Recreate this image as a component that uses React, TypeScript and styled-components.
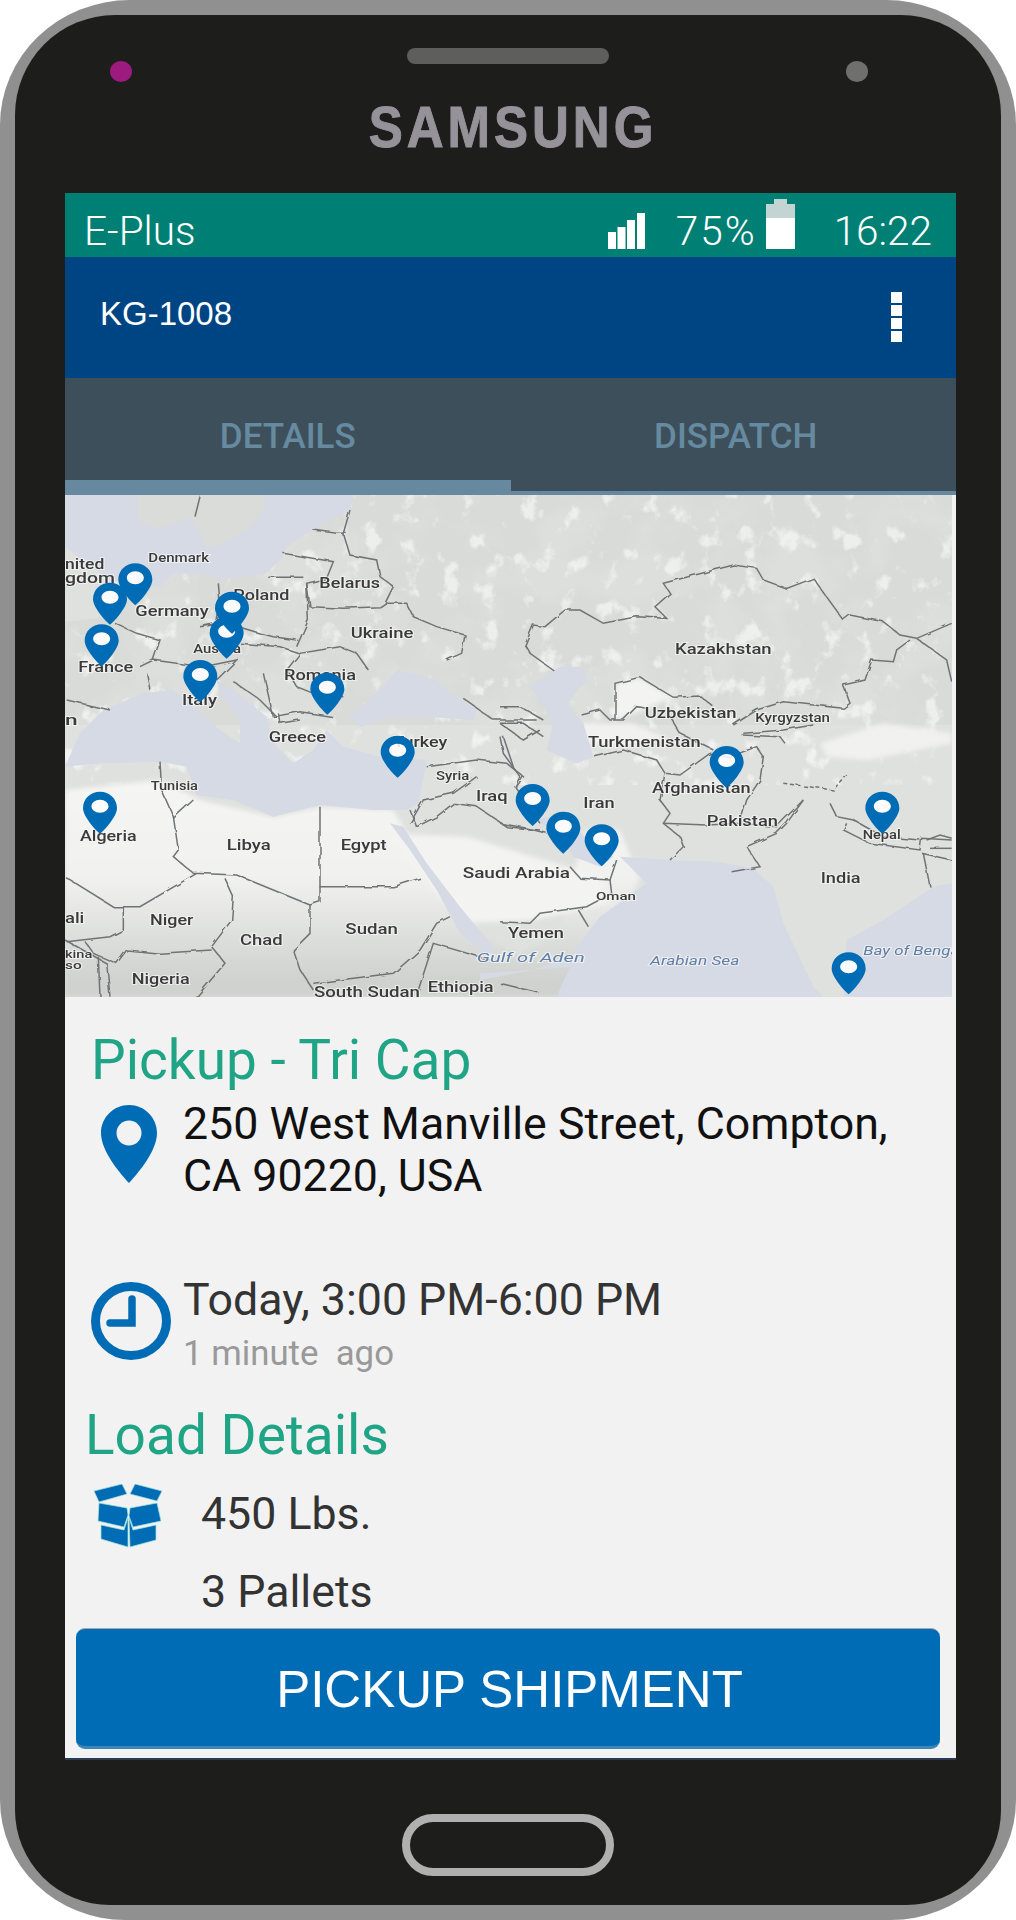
import React, { ReactElement } from 'react'
import styled, { createGlobalStyle } from 'styled-components'

const GlobalStyle = createGlobalStyle`
  html, body {
    margin: 0;
    padding: 0;
    background: #fff;
  }
  * {
    box-sizing: border-box;
  }
`

const Phone = styled.div`
  width: 1016px;
  height: 1920px;
  padding: 15px;
  background: #909090;
  border-radius: 130px 130px 125px 125px / 125px 125px 120px 120px;
  font-family: Roboto, 'Liberation Sans', sans-serif;
`

const Body = styled.div`
  height: 1890px;
  padding: 0 45px 0 50px;
  background: #1d1d1b;
  display: flex;
  flex-direction: column;
  border-radius: 100px 100px 95px 95px / 100px 100px 95px 95px;
`

const TopBezel = styled.div`
  height: 178px;
  padding-top: 33px;
  display: flex;
  flex-direction: column;
`

const Sensors = styled.div`
  height: 34px;
  padding-left: 45px;
  display: flex;
`

const Camera = styled.div<{ $color: string }>`
  width: 22px;
  height: 21px;
  margin-top: 13px;
  border-radius: 50%;
  background: ${(p) => p.$color};
`

const Speaker = styled.div`
  width: 202px;
  height: 16px;
  margin: 0 237px 0 275px;
  border-radius: 8px;
  background: #5e5e5d;
`

const Logo = styled.div`
  margin-top: 17px;
  margin-left: 5px;
  text-align: center;
  font-family: 'Liberation Sans', sans-serif;
  font-weight: 700;
  font-size: 58px;
  line-height: 56px;
  letter-spacing: 4.5px;
  color: #96929a;
  -webkit-text-stroke: 1px #96929a;
  transform: scaleX(0.88);
`

const Screen = styled.div`
  height: 1567px;
  background: #f2f2f2;
  display: flex;
  flex-direction: column;
  border-bottom: 2px solid #2b3a55;
`

const StatusBar = styled.div`
  height: 64px;
  flex-shrink: 0;
  padding: 5px 24px 8px 19px;
  background: #008075;
  color: #fff;
  display: flex;
  align-items: flex-end;
  font-weight: 300;
  font-size: 40.5px;
  line-height: 36px;
`

const Carrier = styled.div`
  margin-right: auto;
`

const StatusText = styled.div<{ $gap: number; $spacing?: number }>`
  margin-left: ${(p) => p.$gap}px;
  letter-spacing: ${(p) => p.$spacing || 0}px;
`

const StatusIcon = styled.svg<{ $gap: number }>`
  display: block;
  margin-left: ${(p) => p.$gap}px;
`

const AppBar = styled.div`
  height: 121px;
  flex-shrink: 0;
  padding: 0 54px 7px 35px;
  background: #004583;
  color: #fff;
  display: flex;
  align-items: center;
  justify-content: space-between;
  font-family: 'Liberation Sans', sans-serif;
  font-size: 33px;
`

const MenuDots = styled.div`
  width: 11px;
  display: flex;
  flex-direction: column;
  gap: 2px;
  margin-top: 5px;
`

const MenuDot = styled.div`
  height: 11px;
  background: #fff;
`

const Tabs = styled.div`
  height: 117px;
  flex-shrink: 0;
  display: flex;
  background: #3e4f5c;
`

const Tab = styled.div<{ $active?: boolean }>`
  width: 50%;
  padding-top: 39px;
  text-align: center;
  font-weight: 500;
  font-size: 35px;
  line-height: 40px;
  color: #668aa0;
  border-bottom: ${(p) => (p.$active ? '15px solid #67899f' : '4px solid #67899f')};
  & + & {
    position: relative;
    padding-left: 5px;
  }
  & + &::before {
    content: '';
    position: absolute;
    left: 0;
    top: 28px;
    height: 85px;
    width: 1px;
    background: #2f3d48;
  }
`

const MapFrame = styled.div`
  height: 502px;
  flex-shrink: 0;
  overflow: hidden;
`

const MapSvg = styled.svg`
  display: block;
  filter: blur(0.4px);
`

const Content = styled.div`
  flex: 1;
  padding-top: 33px;
  display: flex;
  flex-direction: column;
`

const Heading = styled.div<{ $left: number; $top?: number }>`
  margin-left: ${(p) => p.$left}px;
  margin-top: ${(p) => p.$top || 0}px;
  font-size: 55px;
  line-height: 60px;
  color: #1fa585;
`

const Row = styled.div<{ $top: number }>`
  display: flex;
  margin-top: ${(p) => p.$top}px;
`

const IconSlot = styled.div<{ $width: number; $left: number; $top: number }>`
  width: ${(p) => p.$width}px;
  flex-shrink: 0;
  padding-left: ${(p) => p.$left}px;
  margin-top: ${(p) => p.$top}px;
  svg {
    display: block;
  }
`

const MainText = styled.div<{ $color?: string }>`
  font-size: 44.7px;
  line-height: 52px;
  color: ${(p) => p.$color || '#333'};
  white-space: nowrap;
`

const SubText = styled.div`
  margin-top: 7px;
  font-size: 34.8px;
  line-height: 40px;
  color: #999;
  white-space: pre;
`

const Pallets = styled(MainText)`
  margin-top: 26px;
`

const ActionButton = styled.button`
  height: 121px;
  margin: 10px 16px 0 11px;
  padding: 4px 0 0 3px;
  border: none;
  border-top: 1px solid #a9a9a9;
  border-bottom: 3px solid #3d86b8;
  border-radius: 9px;
  background: #006cb5;
  color: #fff;
  font-family: 'Liberation Sans', sans-serif;
  font-size: 51px;
`

const BottomBezel = styled.div`
  flex: 1;
  padding-top: 54px;
  display: flex;
  justify-content: center;
`

const HomeButton = styled.div`
  width: 212px;
  height: 62px;
  margin-right: 5px;
  border: 8px solid #b0b0b0;
  border-radius: 31px;
`

type Label = { x: number; y: number; w: number; s: number; t: string; sea?: boolean }
type Point = { x: number; y: number }

const leftLabels: Label[] = [
  { x: 15, y: 238, w: 118, s: 42, t: 'nited' },
  { x: 15, y: 278, w: 150, s: 42, t: 'gdom' },
  { x: 265, y: 215, w: 182, s: 36, t: 'Denmark' },
  { x: 226, y: 378, w: 220, s: 44, t: 'Germany' },
  { x: 778, y: 293, w: 182, s: 44, t: 'Belarus' },
  { x: 520, y: 331, w: 168, s: 44, t: 'Poland' },
  { x: 872, y: 443, w: 188, s: 44, t: 'Ukraine' },
  { x: 400, y: 490, w: 143, s: 36, t: 'Austria' },
  { x: 55, y: 546, w: 165, s: 44, t: 'France' },
  { x: 672, y: 569, w: 216, s: 44, t: 'Romania' },
  { x: 366, y: 645, w: 105, s: 44, t: 'Italy' },
  { x: 15, y: 706, w: 38, s: 44, t: 'n' },
  { x: 626, y: 756, w: 172, s: 44, t: 'Greece' },
  { x: 1000, y: 771, w: 162, s: 44, t: 'Turkey' },
  { x: 1128, y: 869, w: 100, s: 36, t: 'Syria' },
  { x: 1248, y: 932, w: 95, s: 44, t: 'Iraq' },
  { x: 272, y: 899, w: 142, s: 36, t: 'Tunisia' },
  { x: 60, y: 1054, w: 170, s: 44, t: 'Algeria' },
  { x: 500, y: 1081, w: 132, s: 44, t: 'Libya' },
  { x: 842, y: 1081, w: 138, s: 44, t: 'Egypt' },
  { x: 15, y: 1298, w: 58, s: 44, t: 'ali' },
  { x: 270, y: 1306, w: 130, s: 44, t: 'Niger' },
  { x: 856, y: 1333, w: 158, s: 44, t: 'Sudan' },
  { x: 540, y: 1364, w: 128, s: 44, t: 'Chad' },
  { x: 15, y: 1403, w: 82, s: 34, t: 'kina' },
  { x: 15, y: 1438, w: 50, s: 34, t: 'so' },
  { x: 215, y: 1483, w: 174, s: 44, t: 'Nigeria' },
  { x: 1103, y: 1506, w: 198, s: 44, t: 'Ethiopia' },
  { x: 762, y: 1522, w: 318, s: 44, t: 'South Sudan' },
  { x: 1208, y: 1165, w: 322, s: 44, t: 'Saudi Arabia' },
]

const rightLabels: Label[] = [
  { x: 525, y: 491, w: 290, s: 44, t: 'Kazakhstan' },
  { x: 434, y: 684, w: 276, s: 44, t: 'Uzbekistan' },
  { x: 766, y: 696, w: 224, s: 36, t: 'Kyrgyzstan' },
  { x: 264, y: 770, w: 338, s: 44, t: 'Turkmenistan' },
  { x: 456, y: 908, w: 296, s: 44, t: 'Afghanistan' },
  { x: 250, y: 955, w: 94, s: 44, t: 'Iran' },
  { x: 620, y: 1008, w: 214, s: 44, t: 'Pakistan' },
  { x: 1088, y: 1048, w: 114, s: 36, t: 'Nepal' },
  { x: 962, y: 1180, w: 120, s: 44, t: 'India' },
  { x: 288, y: 1231, w: 120, s: 34, t: 'Oman' },
  { x: 24, y: 1344, w: 168, s: 44, t: 'Yemen' },
  { x: -70, y: 1416, w: 324, s: 40, t: 'Gulf of Aden', sea: true },
  { x: 450, y: 1424, w: 268, s: 40, t: 'Arabian Sea', sea: true },
  { x: 1090, y: 1394, w: 300, s: 40, t: 'Bay of Bengal', sea: true },
]

const leftPins: Point[] = [
  { x: 226, y: 220 },
  { x: 150, y: 278 },
  { x: 125, y: 403 },
  { x: 500, y: 380 },
  { x: 516, y: 305 },
  { x: 421, y: 510 },
  { x: 802, y: 548 },
  { x: 1013, y: 737 },
  { x: 120, y: 905 },
]

const rightPins: Point[] = [
  { x: 98, y: 882 },
  { x: 190, y: 965 },
  { x: 305, y: 1003 },
  { x: 680, y: 768 },
  { x: 1147, y: 905 },
  { x: 1046, y: 1387 },
]

// borders are traced from the crops, zoom units (3x page px)
const leftBorders: string[] = [
  'M870 60 L850 130 L870 195 L950 210 L960 260 L1000 290 L975 340 L1040 340 L1060 380 L1130 410 L1215 435 L1205 490 L1160 510',
  'M760 120 L830 130 L860 130',
  'M670 190 L820 215 L800 265 L740 280 L750 350 L850 355 L960 350 L975 340',
  'M625 262 L730 262',
  'M740 280 L745 390 L710 470',
  'M475 280 L480 340 L470 400 L420 410 L500 400 L600 430 L640 440 L710 450',
  'M680 540 L720 490 L840 470 L890 490 L925 540',
  'M680 540 L710 590 L760 610 L850 620',
  'M540 460 L660 470 L720 490',
  'M165 400 L230 430 L300 450 L280 510',
  'M20 630 L150 660',
  'M240 530 L280 510 L350 520 L430 530 L530 510 L470 570',
  'M260 550 L270 600',
  'M520 575 L600 630 L650 680',
  'M610 550 L640 680 L720 665 L820 680',
  'M655 670 L660 700 L720 690',
  'M300 815 L305 900 L340 980 L355 1080 L340 1100 L400 1150 L530 1155 L750 1245',
  'M340 985 L400 930',
  'M15 1160 L160 1250 L240 1250 L410 1150',
  'M190 1250 L190 1320 L150 1340 L20 1355',
  'M495 1165 L520 1220 L515 1290 L455 1370 L495 1420 L410 1520',
  'M75 1355 L100 1390 L170 1420 L200 1380 L300 1390 L455 1380',
  'M780 950 L780 1190 L1000 1190 L1080 1165',
  'M780 1190 L780 1235 L750 1245 L750 1330 L700 1380 L720 1440 L760 1500',
  'M760 1480 L1000 1450 L1080 1380 L1130 1300 L1170 1280',
  'M1075 1500 L1120 1360 L1290 1410',
  'M1100 830 L1250 810 L1340 820 L1390 860 L1370 890',
  'M1050 1000 L1090 930 L1180 910 L1250 860',
  'M1180 940 L1250 950 L1340 1010 L1440 1020',
  'M1050 960 L1070 1010 L1130 980 L1180 940',
  'M1330 740 L1360 830',
  'M1210 625 L1300 690 L1430 690',
  'M1320 700 L1390 750 L1440 720',
  'M420 20 L405 80',
  'M120 1520 L115 1400',
  'M15 1350 L140 1420 L150 1520',
]

const rightBorders: string[] = [
  'M160 540 L90 490 L75 465 L100 405 L135 410 L195 360 L240 360 L310 400 L410 380 L500 385 L465 350 L510 310 L490 280 L700 225 L770 235 L790 270 L860 295 L940 265 L1030 390 L1050 375 L1150 395 L1200 435 L1250 445 L1355 400',
  'M1230 450 L1190 480 L1180 515 L1115 510 L1095 570 L1030 585 L1050 640 L1030 655 L850 635 L770 660 L700 705',
  'M1250 445 L1340 510 L1355 575',
  'M345 690 L345 580 L420 562 L520 622 L600 618 L640 650',
  'M245 675 L300 660 L330 690 L370 690 L410 650 L440 655',
  'M510 680 L540 730 L640 780',
  'M285 800 L370 780 L470 810 L495 850 L540 855 L630 790',
  'M495 850 L480 930 L510 970 L490 1000 L540 1040 L550 1070 L510 1110',
  'M490 1000 L620 1005 L720 1000 L830 1010 L880 960 L910 930',
  'M630 790 L690 800 L770 770 L790 800 L780 870 L740 930 L720 1000',
  'M910 930 L860 1000 L830 1030 L740 1070 L780 1130 L695 1145',
  'M730 730 L850 720 L940 705',
  'M725 735 L840 740 L855 760',
  'M0 740 L10 790 L60 860 L45 890 L120 1000',
  'M0 1000 L80 1015 L140 1030',
  'M210 1130 L240 1165 L330 1170 L350 1110',
  'M330 1170 L335 1210 L260 1250 L120 1270 L90 1300 L0 1295',
  'M235 1260 L265 1310',
  'M990 940 L1010 980 L1060 990 L1150 1040 L1260 1050',
  'M1040 1000 L1030 1020 L1110 1060 L1260 1080 L1265 1045 L1355 1050',
  'M1270 1090 L1290 1190',
  'M1280 1050 L1320 1035 L1355 1045',
  'M1290 1075 L1355 1075',
  'M1265 1090 L1355 1110',
  'M0 650 L60 650 L130 690',
  'M0 700 L70 700 L130 740',
  'M0 1480 L115 1508',
]

function Pin({ x, y }: Point): ReactElement {
  return (
    <g transform={`translate(${x - 51} ${y}) scale(3)`}>
      <ellipse cx="17" cy="15" rx="9" ry="7.5" fill="#fff" fillOpacity="0.85" />
      <path
        fillRule="evenodd"
        fill="#006cb5"
        d="M17 0C7.5 0 0 7 0 16.5 0 24 11 37 17 42 23 37 34 24 34 16.5 34 7 26.5 0 17 0ZM17 8C22 8 25.5 11 25.5 14.5 25.5 18 22 21 17 21 12 21 8.5 18 8.5 14.5 8.5 11 12 8 17 8Z"
      />
    </g>
  )
}

function MapLabel({ x, y, w, s, t, sea }: Label): ReactElement {
  return (
    <text
      x={x}
      y={y}
      fontSize={s}
      textLength={w}
      lengthAdjust="spacingAndGlyphs"
      fontFamily="Roboto, sans-serif"
      fontWeight={sea ? 400 : 500}
      fontStyle={sea ? 'italic' : 'normal'}
      fill={sea ? '#5f7ea6' : '#3a3a3a'}
      stroke="#f4f4f4"
      strokeWidth="6"
      strokeOpacity="0.75"
      paintOrder="stroke"
    >
      {t}
    </text>
  )
}

function WorldMap(): ReactElement {
  return (
    <MapSvg width="891" height="502" viewBox="65 495 891 502">
      <defs>
        <filter id="blotches" x="0" y="0" width="100%" height="100%">
          <feTurbulence type="fractalNoise" baseFrequency="0.05 0.04" numOctaves="5" seed="11" />
          <feColorMatrix
            type="matrix"
            values="0 0 0 0 1  0 0 0 0 1  0 0 0 0 1  6 0 0 0 -3.6"
          />
        </filter>
        <filter id="shades" x="0" y="0" width="100%" height="100%">
          <feTurbulence type="fractalNoise" baseFrequency="0.015" numOctaves="4" seed="3" />
          <feColorMatrix
            type="matrix"
            values="0 0 0 0 0.74  0 0 0 0 0.77  0 0 0 0 0.74  0 4 0 0 -1.75"
          />
        </filter>
        <filter id="soft" x="-5%" y="-5%" width="110%" height="110%">
          <feGaussianBlur stdDeviation="2.5" />
        </filter>
        <filter id="wiggle" x="-5%" y="-5%" width="110%" height="110%">
          <feTurbulence type="fractalNoise" baseFrequency="0.08" numOctaves="2" seed="5" result="n" />
          <feDisplacementMap in="SourceGraphic" in2="n" scale="4" />
        </filter>
        <linearGradient id="sahara" gradientUnits="userSpaceOnUse" x1="0" y1="750" x2="0" y2="980">
          <stop offset="0" stopColor="#f6f6f5" />
          <stop offset="0.55" stopColor="#f1f1f0" />
          <stop offset="1" stopColor="#cfd2cf" />
        </linearGradient>
      </defs>
      <rect x="65" y="495" width="891" height="502" fill="#dfe1de" />
      <rect x="65" y="495" width="891" height="230" fill="#d8dbd7" />
      <rect x="65" y="495" width="891" height="230" filter="url(#shades)" opacity="0.6" />
      <rect x="65" y="495" width="891" height="290" filter="url(#blotches)" opacity="0.55" />

      <g filter="url(#soft)">
        <path
          fill="url(#sahara)"
          d="M65 790 L160 780 L200 800 L273 817 L320 807 L393 810 L430 870 L490 940 L520 955 L560 930 L585 830 L620 830 L640 880 L590 960 L565 997 L65 997 Z"
        />
        <g transform="translate(500 490) scale(0.33333)">
          <path fill="#f3f3f2" d="M-340 1030 L-100 1040 L200 1130 L300 1160 L330 1240 L100 1290 L-100 1300 L-200 1200 Z" />
          <path fill="#f3f3f2" d="M345 580 L420 565 L520 620 L430 660 L345 690 Z" />
          <path fill="#f1f1f0" d="M200 700 L400 700 L510 750 L340 770 L260 760 Z" />
          <path fill="#f1f1f0" d="M960 760 L1150 700 L1355 730 L1355 760 L1100 810 L980 800 Z" />
        </g>
      </g>

      <g transform="translate(60 490) scale(0.33333)" fill="#d5dae4">
        <path d="M15 15 L880 15 L870 60 L770 110 L680 170 L670 200 L620 250 L480 270 L430 250 L340 250 L300 290 L170 270 L15 400 Z" />
        <path fill="#d9dcd8" d="M230 15 L235 90 L290 115 L395 85 L440 170 L470 170 L560 120 L610 60 L615 15 Z" />
        <path fill="#dfe1de" d="M15 170 L110 240 L170 290 L150 380 L15 395 Z" />
        <path d="M15 830 L60 730 L130 660 L250 610 L340 600 L400 650 L480 720 L540 760 L540 690 L480 610 L470 570 L520 600 L620 680 L640 760 L700 820 L760 780 L800 720 L850 770 L960 800 L1100 810 L1075 940 L1040 960 L940 960 L780 945 L640 980 L520 930 L410 915 L380 830 L300 815 L120 820 Z" />
        <path d="M870 680 L960 600 L1010 540 L1060 550 L1130 570 L1160 600 L1250 660 L1240 690 L1100 680 L1000 680 L900 710 Z" />
        <path d="M990 1000 L1030 1010 L1100 1120 L1200 1250 L1300 1370 L1290 1400 L1200 1330 L1130 1200 L1050 1080 Z" />
      </g>

      <g transform="translate(500 490) scale(0.33333)" fill="#d5dae4">
        <path d="M-60 1450 L100 1440 L210 1400 L300 1280 L440 1180 L360 1100 L500 1110 L650 1115 L760 1135 L820 1190 L850 1300 L940 1490 L970 1520 L170 1520 L210 1430 L100 1440 L-60 1470 Z" />
        <path d="M1030 1520 L1040 1350 L1150 1290 L1300 1190 L1355 1180 L1355 1520 Z" />
        <path d="M110 990 L170 1030 L220 1100 L300 1130 L340 1100 L300 1070 L240 1030 L150 980 Z" />
        <path d="M90 590 L180 530 L250 530 L260 570 L200 640 L250 700 L280 800 L230 820 L140 780 L160 700 Z" />
      </g>

      <g filter="url(#wiggle)">
        <g transform="translate(60 490) scale(0.33333)" fill="none" stroke="#6f7375" strokeWidth="4.500">
          {leftBorders.map((d) => (
            <path key={d} d={d} />
          ))}
        </g>
        <g transform="translate(500 490) scale(0.33333)" fill="none" stroke="#6f7375" strokeWidth="4.500">
          {rightBorders.map((d) => (
            <path key={d} d={d} />
          ))}
          <path d="M850 880 L1000 900 L1040 850" strokeDasharray="12 8" />
        </g>
      </g>

      <g transform="translate(60 490) scale(0.33333)">
        {leftLabels.map((l) => (
          <MapLabel key={l.t} {...l} />
        ))}
        {leftPins.map((p) => (
          <Pin key={`${p.x}-${p.y}`} {...p} />
        ))}
      </g>
      <g transform="translate(500 490) scale(0.33333)">
        {rightLabels.map((l) => (
          <MapLabel key={l.t} {...l} />
        ))}
        {rightPins.map((p) => (
          <Pin key={`${p.x}-${p.y}`} {...p} />
        ))}
      </g>
      <rect x="952" y="495" width="4" height="502" fill="#f2f2f2" />
    </MapSvg>
  )
}

function LocationIcon(): ReactElement {
  return (
    <svg width="56" height="78" viewBox="0 0 56 78">
      <path
        fillRule="evenodd"
        fill="#006cb5"
        d="M28 0C12.5 0 0 12.5 0 28 0 45 17 66 28 78 39 66 56 45 56 28 56 12.5 43.5 0 28 0ZM28 15.500C35 15.500 40.500 21 40.500 28 40.500 35 35 40.500 28 40.500 21 40.500 15.500 35 15.500 28 15.500 21 21 15.500 28 15.500Z"
      />
    </svg>
  )
}

function ClockIcon(): ReactElement {
  return (
    <svg width="80" height="78" viewBox="0 0 80 78">
      <ellipse cx="40" cy="39" rx="35.500" ry="34.500" fill="none" stroke="#006cb5" strokeWidth="9" />
      <path d="M41 17V41H19" fill="none" stroke="#006cb5" strokeWidth="7.500" strokeLinecap="round" />
    </svg>
  )
}

function BoxIcon(): ReactElement {
  return (
    <svg width="68" height="64" viewBox="0 0 68 64">
      <g fill="#006cb5" stroke="#a5e2d8" strokeWidth="0.7">
        <path d="M0 7 L28 0 L33 10 L5 18 Z" />
        <path d="M36 10 L41 0 L68 7 L63 17 Z" />
        <path d="M5 19 L33 24 L34 31 L30 43 L4 37 Z" />
        <path d="M36 24 L63 19 L67 37 L39 43 L35 32 Z" />
        <path d="M7 41 L30 46 L34 34 L34 63 L7 55 Z" />
        <path d="M35 34 L39 46 L62 41 L62 56 L36 63 Z" />
      </g>
    </svg>
  )
}

export default function App(): ReactElement {
  return (
    <>
      <GlobalStyle />
      <Phone>
        <Body>
          <TopBezel>
            <Sensors>
              <Camera $color="#9d1a7e" />
              <Speaker />
              <Camera $color="#6f6f6e" />
            </Sensors>
            <Logo>SAMSUNG</Logo>
          </TopBezel>
          <Screen>
            <StatusBar>
              <Carrier>E-Plus</Carrier>
              <StatusIcon $gap={0} width="37" height="36" viewBox="0 0 37 36">
                <g fill="#fff">
                  <rect x="0" y="19" width="8" height="17" />
                  <rect x="9.500" y="14" width="8" height="22" />
                  <rect x="19" y="7" width="8" height="29" />
                  <rect x="29" y="0" width="8" height="36" />
                </g>
              </StatusIcon>
              <StatusText $gap={31} $spacing={2}>
                75%
              </StatusText>
              <StatusIcon $gap={9} width="29" height="50" viewBox="0 0 29 50">
                <path fill="#c3d5d2" d="M8 0H21V5H29V19H0V5H8Z" />
                <rect y="19" width="29" height="31" fill="#fff" />
              </StatusIcon>
              <StatusText $gap={39}>16:22</StatusText>
            </StatusBar>
            <AppBar>
              <div>KG-1008</div>
              <MenuDots>
                <MenuDot />
                <MenuDot />
                <MenuDot />
                <MenuDot />
              </MenuDots>
            </AppBar>
            <Tabs>
              <Tab $active>DETAILS</Tab>
              <Tab>DISPATCH</Tab>
            </Tabs>
            <MapFrame>
              <WorldMap />
            </MapFrame>
            <Content>
              <Heading $left={26}>Pickup - Tri Cap</Heading>
              <Row $top={8}>
                <IconSlot $width={118} $left={36} $top={7}>
                  <LocationIcon />
                </IconSlot>
                <MainText $color="#111">
                  250 West Manville Street, Compton,
                  <br />
                  CA 90220, USA
                </MainText>
              </Row>
              <Row $top={72}>
                <IconSlot $width={118} $left={26} $top={8}>
                  <ClockIcon />
                </IconSlot>
                <div>
                  <MainText>Today, 3:00 PM-6:00 PM</MainText>
                  <SubText>1 minute  ago</SubText>
                </div>
              </Row>
              <Heading $left={20} $top={32}>
                Load Details
              </Heading>
              <Row $top={23}>
                <IconSlot $width={136} $left={29} $top={-4}>
                  <BoxIcon />
                </IconSlot>
                <div>
                  <MainText>450 Lbs.</MainText>
                  <Pallets>3 Pallets</Pallets>
                </div>
              </Row>
              <ActionButton>PICKUP SHIPMENT</ActionButton>
            </Content>
          </Screen>
          <BottomBezel>
            <HomeButton />
          </BottomBezel>
        </Body>
      </Phone>
    </>
  )
}
